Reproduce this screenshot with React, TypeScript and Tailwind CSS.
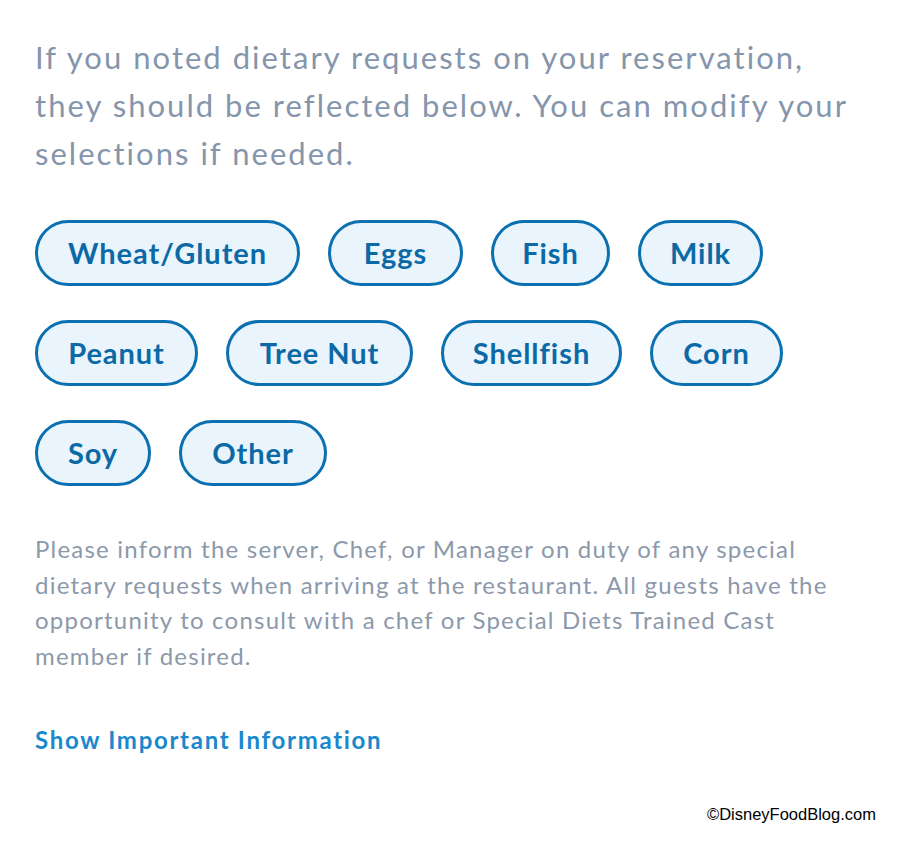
import React from "react";

const rows: { label: string; w: number }[][] = [
  [
    { label: "Wheat/Gluten", w: 265 },
    { label: "Eggs", w: 135 },
    { label: "Fish", w: 119 },
    { label: "Milk", w: 125 },
  ],
  [
    { label: "Peanut", w: 163 },
    { label: "Tree Nut", w: 187 },
    { label: "Shellfish", w: 181 },
    { label: "Corn", w: 133 },
  ],
  [
    { label: "Soy", w: 116 },
    { label: "Other", w: 148 },
  ],
];

export default function App() {
  return (
    <div
      className="w-[900px] h-[841px] bg-white relative overflow-hidden"
      style={{ fontFamily: "Lato, 'Open Sans', sans-serif" }}
    >
      <div className="pl-[35px] pt-[33px]">
        <p className="text-[31px] leading-[48px] text-[#8595ab] tracking-[2.03px]">
          If you noted dietary requests on your reservation,
          <br />
          they should be reflected below. You can modify your
          <br />
          selections if needed.
        </p>
        <div className="mt-[43px] flex flex-col gap-[34px]">
          {rows.map((row, i) => (
            <div key={i} className="flex gap-[28px]">
              {row.map((p) => (
                <div
                  key={p.label}
                  style={{ width: p.w }}
                  className="h-[66px] rounded-full border-[3.5px] border-[#0b70b0] bg-[#eaf4fc] flex items-center justify-center text-[29px] font-bold text-[#0b6aa6] tracking-[0.95px]"
                >
                  {p.label}
                </div>
              ))}
            </div>
          ))}
        </div>
        <p className="mt-[45px] text-[24px] leading-[35.5px] text-[#8c99ab] tracking-[1.22px]">
          Please inform the server, Chef, or Manager on duty of any special
          <br />
          dietary requests when arriving at the restaurant. All guests have the
          <br />
          opportunity to consult with a chef or Special Diets Trained Cast
          <br />
          member if desired.
        </p>
        <p className="mt-[49px] text-[24px] leading-[35px] font-bold text-[#1a88cc] tracking-[1.7px]">
          Show Important Information
        </p>
      </div>
      <div
        className="absolute left-[707px] top-[802px] text-[16.5px] text-black"
        style={{ fontFamily: "'Liberation Sans', Arial, sans-serif" }}
      >
        ©DisneyFoodBlog.com
      </div>
    </div>
  );
}
